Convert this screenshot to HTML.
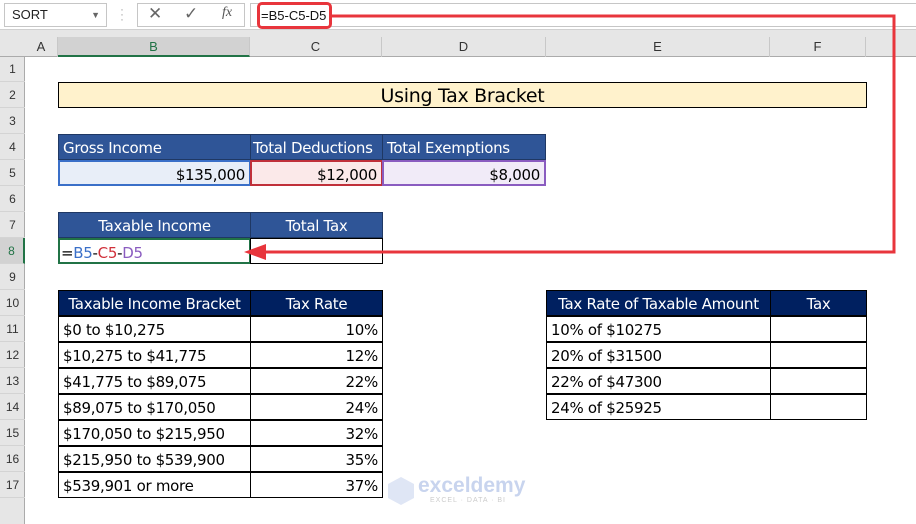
<!DOCTYPE html>
<html><head><meta charset="utf-8"><style>
*{margin:0;padding:0;box-sizing:border-box}
body{width:916px;height:524px;overflow:hidden;background:#fff;font-family:"Liberation Sans",sans-serif;position:relative}
.a{position:absolute}
.ch{position:absolute;top:37px;height:20px;font-size:13px;color:#333;text-align:center;line-height:20px;border-right:1px solid #c8c8c8}
.rh{position:absolute;left:0;width:25px;height:26px;font-size:12px;color:#333;text-align:center;line-height:26px;border-bottom:1px solid #d4d4d4}
.c{position:absolute;height:26px;font-size:15px;line-height:26px;padding:0 4px;white-space:nowrap;font-family:"DejaVu Sans","Liberation Sans",sans-serif;letter-spacing:-0.3px}
.hd{color:#fff;text-align:center}
.h1{background:#2f5597;border:1px solid #1f3864}
.h2{background:#002060;border:1px solid #000}
.b{border:1px solid #000;color:#000}
.r{text-align:right}
</style></head><body>
<div class="a" style="left:0;top:0;width:916px;height:30px;background:#fff;border-bottom:1px solid #d0d0d0"></div>
<div class="a" style="left:4px;top:3px;width:103px;height:24px;border:1px solid #c6c6c6;font-size:13px;line-height:22px;padding-left:7px;color:#222">SORT<span style="position:absolute;right:6px;top:0;font-size:9px;color:#666">▼</span></div>
<div class="a" style="left:120px;top:7px;font-size:12px;color:#aaa;line-height:5px">·<br>·<br>·</div>
<div class="a" style="left:137px;top:3px;width:108px;height:24px;border:1px solid #c6c6c6"></div>
<div class="a" style="left:148px;top:4px;font-size:17px;color:#666">✕</div>
<div class="a" style="left:184px;top:4px;font-size:17px;color:#666">✓</div>
<div class="a" style="left:222px;top:5px;font-size:14px;color:#555;font-style:italic;font-family:'Liberation Serif',serif">fx</div>
<div class="a" style="left:250px;top:3px;width:666px;height:24px;border:1px solid #c6c6c6;border-right:none"></div>
<div class="a" style="left:257px;top:2px;width:75px;height:27px;border:3px solid #e8353c;border-radius:5px"></div>
<div class="a" style="left:261px;top:6px;font-size:13px;line-height:19px;color:#111;white-space:nowrap">=B5-C5-D5</div>
<div class="a" style="left:0;top:30px;width:916px;height:27px;background:#e6e6e6;border-bottom:1px solid #ababab"></div>
<div class="a" style="left:0;top:57px;width:25px;height:467px;background:#e6e6e6;border-right:1px solid #ababab"></div>
<div class="ch" style="left:25px;width:33px">A</div>
<div class="ch" style="left:58px;width:192px;background:#d2d2d2;border-bottom:2px solid #217346;color:#217346">B</div>
<div class="ch" style="left:250px;width:132px">C</div>
<div class="ch" style="left:382px;width:164px">D</div>
<div class="ch" style="left:546px;width:224px">E</div>
<div class="ch" style="left:770px;width:96px">F</div>
<div class="rh" style="top:56px">1</div><div class="rh" style="top:82px">2</div><div class="rh" style="top:108px">3</div><div class="rh" style="top:134px">4</div><div class="rh" style="top:160px">5</div><div class="rh" style="top:186px">6</div><div class="rh" style="top:212px">7</div><div class="rh" style="top:238px;background:#d2d2d2;border-right:2px solid #217346;color:#217346">8</div><div class="rh" style="top:264px">9</div><div class="rh" style="top:290px">10</div><div class="rh" style="top:316px">11</div><div class="rh" style="top:342px">12</div><div class="rh" style="top:368px">13</div><div class="rh" style="top:394px">14</div><div class="rh" style="top:420px">15</div><div class="rh" style="top:446px">16</div><div class="rh" style="top:472px">17</div>
<div class="c" style="left:58px;top:82px;width:809px;background:#fff2cc;border:1px solid #000;text-align:center;font-size:19px">Using Tax Bracket</div>
<div class="c hd h1" style="left:58px;top:134px;width:193px;text-align:left">Gross Income</div>
<div class="c hd h1" style="left:250px;top:134px;width:133px;text-align:left;padding:0 2px">Total Deductions</div>
<div class="c hd h1" style="left:382px;top:134px;width:164px;text-align:left">Total Exemptions</div>
<div class="c r" style="left:58px;top:160px;width:193px;background:#e8eef8;border:2px solid #3a6fc8">$135,000</div>
<div class="c r" style="left:250px;top:160px;width:133px;background:#fbe9e9;border:2px solid #c0303a">$12,000</div>
<div class="c r" style="left:382px;top:160px;width:164px;background:#f1ebf8;border:2px solid #8a5cc0">$8,000</div>
<div class="c hd h1" style="left:58px;top:212px;width:193px">Taxable Income</div>
<div class="c hd h1" style="left:250px;top:212px;width:133px">Total Tax</div>
<div class="c" style="left:58px;top:238px;width:193px;border:2px solid #217346;padding-left:1px">=<span style="color:#3a6fc8">B5</span>-<span style="color:#d0303a">C5</span>-<span style="color:#8a5cc0">D5</span></div>
<div class="c b" style="left:250px;top:238px;width:133px"></div>
<div class="c hd h2" style="left:58px;top:290px;width:193px">Taxable Income Bracket</div>
<div class="c hd h2" style="left:250px;top:290px;width:133px">Tax Rate</div>
<div class="c b" style="left:58px;top:316px;width:193px">$0 to $10,275</div><div class="c b r" style="left:250px;top:316px;width:133px">10%</div>
<div class="c b" style="left:58px;top:342px;width:193px">$10,275 to $41,775</div><div class="c b r" style="left:250px;top:342px;width:133px">12%</div>
<div class="c b" style="left:58px;top:368px;width:193px">$41,775 to $89,075</div><div class="c b r" style="left:250px;top:368px;width:133px">22%</div>
<div class="c b" style="left:58px;top:394px;width:193px">$89,075 to $170,050</div><div class="c b r" style="left:250px;top:394px;width:133px">24%</div>
<div class="c b" style="left:58px;top:420px;width:193px">$170,050 to $215,950</div><div class="c b r" style="left:250px;top:420px;width:133px">32%</div>
<div class="c b" style="left:58px;top:446px;width:193px">$215,950 to $539,900</div><div class="c b r" style="left:250px;top:446px;width:133px">35%</div>
<div class="c b" style="left:58px;top:472px;width:193px">$539,901 or more</div><div class="c b r" style="left:250px;top:472px;width:133px">37%</div>
<div class="c hd h2" style="left:546px;top:290px;width:225px">Tax Rate of Taxable Amount</div>
<div class="c hd h2" style="left:770px;top:290px;width:97px">Tax</div>
<div class="c b" style="left:546px;top:316px;width:225px">10% of $10275</div><div class="c b" style="left:770px;top:316px;width:97px"></div>
<div class="c b" style="left:546px;top:342px;width:225px">20% of $31500</div><div class="c b" style="left:770px;top:342px;width:97px"></div>
<div class="c b" style="left:546px;top:368px;width:225px">22% of $47300</div><div class="c b" style="left:770px;top:368px;width:97px"></div>
<div class="c b" style="left:546px;top:394px;width:225px">24% of $25925</div><div class="c b" style="left:770px;top:394px;width:97px"></div>
<div class="a" style="left:388px;top:477px;width:26px;height:28px;background:#dfe6f5;clip-path:polygon(50% 0,100% 25%,100% 75%,50% 100%,0 75%,0 25%)"></div>
<div class="a" style="left:418px;top:474px;font-size:21px;color:#c8d4ee;font-weight:bold">exceldemy</div>
<div class="a" style="left:430px;top:497px;font-size:7px;color:#ccc;letter-spacing:1px">EXCEL · DATA · BI</div>
<svg class="a" style="left:0;top:0" width="916" height="524">
<polyline points="332,16 894,16 894,252 262,252" fill="none" stroke="#e8353c" stroke-width="3"/>
<polygon points="244,252 266,244 266,260" fill="#e8353c"/>
</svg>
</body></html>
